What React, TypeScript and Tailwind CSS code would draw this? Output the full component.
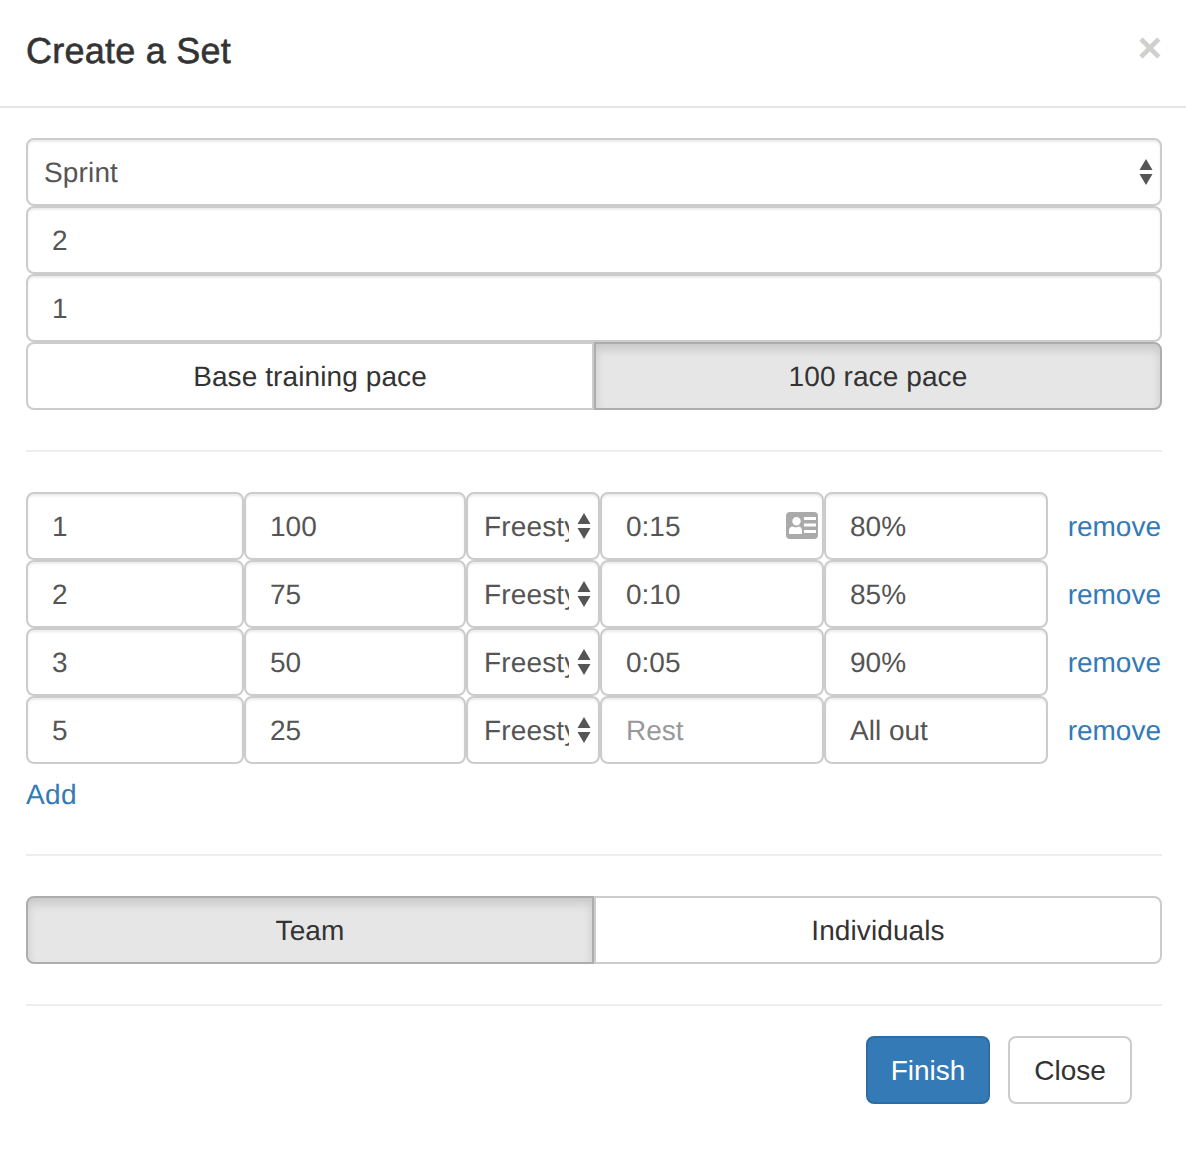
const font = { fontFamily: '"Liberation Sans", Arial, sans-serif' };

const inputCls =
  "block h-[68px] w-full rounded-[8px] border-2 border-[#cccccc] bg-white px-6 pt-[2px] text-[28px] leading-[40px] text-[#555555] shadow-[inset_0_2px_2px_rgba(0,0,0,0.075)] outline-none placeholder:text-[#999999] [text-rendering:geometricPrecision]";

function Arrows() {
  return (
    <svg width="14" height="26" viewBox="0 0 14 26" className="shrink-0">
      <path d="M7 0 L13.5 11 L0.5 11 Z M0.5 15 L13.5 15 L7 26 Z" fill="#555555" />
    </svg>
  );
}

function Select({ value, wide }: { value: string; wide?: boolean }) {
  return (
    <div className="flex h-[68px] w-full items-center rounded-[8px] border-2 border-[#cccccc] bg-white pl-4 pr-[7px] text-[28px] tracking-[0.15px] text-[#555555] shadow-[inset_0_2px_2px_rgba(0,0,0,0.075)]">
      <span className={wide ? "min-w-0 flex-1 whitespace-nowrap pt-[2px]" : "w-[85px] overflow-x-clip whitespace-nowrap pt-[2px]"}>{value}</span>
      <span className={wide ? "flex" : "ml-[8px] flex"}>
        <Arrows />
      </span>
    </div>
  );
}

function Toggle({ left, right, active }: { left: string; right: string; active: "left" | "right" }) {
  const base = "flex h-[68px] w-1/2 items-center justify-center border-2 pt-[2px] text-[28px] tracking-[0.1px] text-[#333333]";
  const on = "border-[#adadad] bg-[#e6e6e6] shadow-[inset_0_6px_10px_rgba(0,0,0,0.125)]";
  const off = "border-[#cccccc] bg-white";
  return (
    <div className="flex w-full">
      <div className={`${base} rounded-l-[8px] ${active === "left" ? on : off}`}>{left}</div>
      <div className={`${base} rounded-r-[8px] ${active === "right" ? on : off}`}>{right}</div>
    </div>
  );
}

function CardIcon() {
  return (
    <svg width="32" height="27" viewBox="0 0 32 27" className="absolute right-[6px] top-[20px]">
      <path
        fillRule="evenodd"
        fill="#aaaaaa"
        d="M4 0 H28 A4 4 0 0 1 32 4 V23 A4 4 0 0 1 28 27 H4 A4 4 0 0 1 0 23 V4 A4 4 0 0 1 4 0 Z M10.5 5 A4.2 4.2 0 1 0 10.5 13.4 A4.2 4.2 0 1 0 10.5 5 Z M3 22 H16 V18.5 C16 16 14 14.5 13 14.5 L9.5 15.5 L6.5 14.5 C5 14.5 3 16 3 18.5 Z M18 5 V8 H30 V5 Z M18 11.5 V14.5 H30 V11.5 Z M18 18 V21 H30 V18 Z"
      />
    </svg>
  );
}

const rows = [
  { a: "1", b: "100", t: "0:15", e: "80%", icon: true },
  { a: "2", b: "75", t: "0:10", e: "85%" },
  { a: "3", b: "50", t: "0:05", e: "90%" },
  { a: "5", b: "25", t: "", e: "All out" },
];

export default function App() {
  return (
    <div className="h-[1152px] w-[1186px] bg-white [text-rendering:geometricPrecision]" style={font}>
      <header className="flex h-[108px] items-start justify-between border-b-2 border-[#e5e5e5] pl-[26px] pr-[24px] pt-[29px]">
        <h4 className="text-[36px] leading-[44px] font-medium tracking-[0.25px] text-[#333333] [-webkit-text-stroke:0.6px_#333333]">Create a Set</h4>
        <span className="mt-[-2px] text-[42px] leading-[42px] font-bold text-[#cfcfcf]">×</span>
      </header>

      <main className="px-[24px] pt-[30px]">
        <div className="mx-[2px] w-[1136px]">
          <Select value="Sprint" wide />
          <input readOnly value="2" className={inputCls} />
          <input readOnly value="1" className={inputCls} />
          <Toggle left="Base training pace" right="100 race pace" active="right" />
          <hr className="my-[40px] border-t-2 border-[#eeeeee]" />

          {rows.map((r) => (
            <div key={r.a} className="flex h-[68px]">
              <div className="w-[218px]">
                <input readOnly value={r.a} className={inputCls} />
              </div>
              <div className="w-[222px]">
                <input readOnly value={r.b} className={inputCls} />
              </div>
              <div className="w-[134px]">
                <Select value="Freestyle" />
              </div>
              <div className="relative w-[224px]">
                <input readOnly value={r.t} placeholder="Rest" className={inputCls} />
                {r.icon && <CardIcon />}
              </div>
              <div className="w-[224px]">
                <input readOnly value={r.e} className={inputCls} />
              </div>
              <a className="flex flex-1 items-center justify-end pr-px pt-[2px] text-[28px] text-[#337ab7]">remove</a>
            </div>
          ))}
          <a className="mt-[11px] block text-[28px] leading-[40px] tracking-[0.4px] text-[#337ab7]">Add</a>
          <hr className="mb-[40px] mt-[39px] border-t-2 border-[#eeeeee]" />
          <Toggle left="Team" right="Individuals" active="left" />
          <hr className="mb-[30px] mt-[40px] border-t-2 border-[#eeeeee]" />
          <div className="flex justify-end gap-[18px] pr-[30px]">
            <button className="flex h-[68px] w-[124px] items-center justify-center rounded-[8px] border-2 border-[#2e6da4] bg-[#337ab7] pt-[2px] text-[28px] text-white">
              Finish
            </button>
            <button className="flex h-[68px] w-[124px] items-center justify-center rounded-[8px] border-2 border-[#cccccc] bg-white pt-[2px] text-[28px] text-[#333333]">
              Close
            </button>
          </div>
        </div>
      </main>
    </div>
  );
}
